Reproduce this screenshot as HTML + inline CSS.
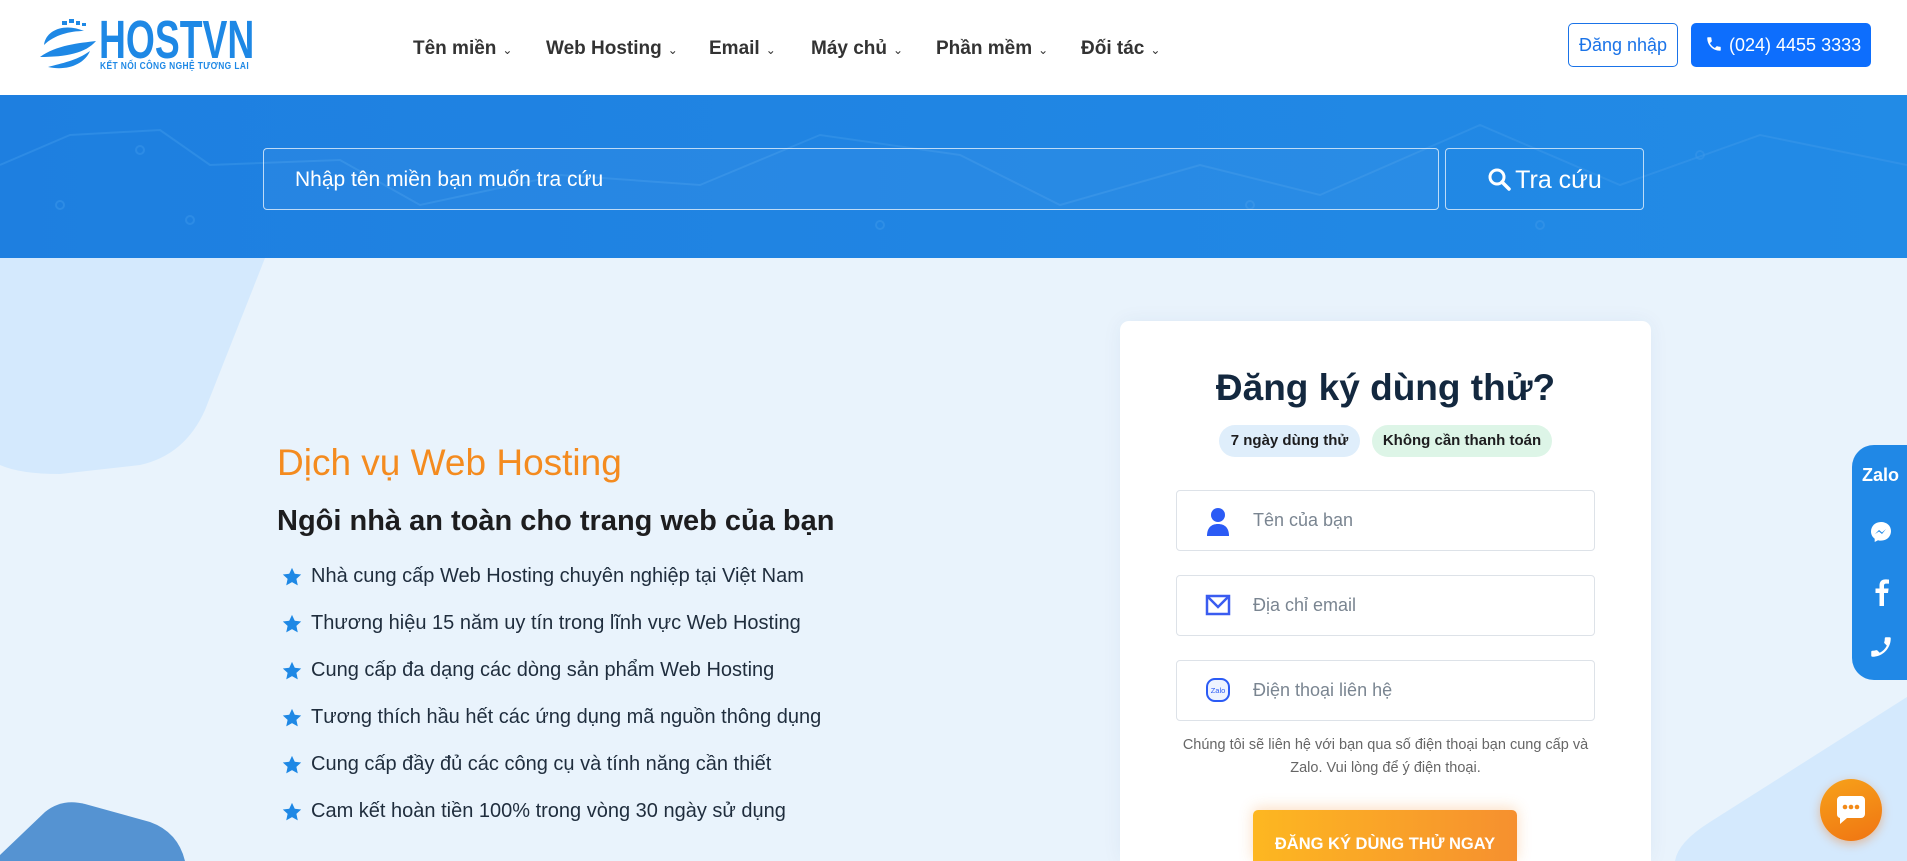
<!DOCTYPE html>
<html style="width:1907px;height:861px;overflow:hidden"><head><meta charset="utf-8">
<style>
*{box-sizing:border-box;margin:0;padding:0}
body{width:1907px;height:861px;overflow:hidden;position:relative;background:#e9f3fc;font-family:"Liberation Sans",Arial,sans-serif}
.hdr{position:absolute;left:0;top:0;width:1907px;height:95px;background:#fff}
.nav{position:absolute;top:38px;font-size:19px;font-weight:bold;color:#333;white-space:nowrap}
.nav span{font-size:12px;font-weight:normal;margin-left:6px}
.band{position:absolute;left:0;top:95px;width:1907px;height:163px;background:linear-gradient(90deg,#1e7fe0,#228be6);overflow:hidden}
.abs{position:absolute}
li{list-style:none;position:absolute;left:281px;font-size:20px;color:#1f2d3d;white-space:nowrap}
li svg{position:absolute;left:0;top:1px}
li b{font-weight:normal;margin-left:30px}
.inp{position:absolute;left:1176px;width:419px;height:61px;border:1px solid #dde2e8;border-radius:4px;background:#fff}
.inp .t{position:absolute;left:76px;top:19px;font-size:18px;color:#7a8591}
.inp svg{position:absolute;left:28px;top:16px}
</style></head><body>
<svg class="abs" style="left:0;top:0" width="1907" height="861">
<path d="M0 258 L265 258 L205 410 Q185 455 140 465 L60 474 Q20 474 0 465 Z" fill="#d4e9fd"/>
<path d="M0 855 L45 812 Q62 798 85 804 L150 822 Q178 832 185 861 L0 861Z" fill="#5593d2"/>
<path d="M1907 697 L1710 822 Q1678 842 1675 861 L1907 861 Z" fill="#d4e9fd"/>
</svg>

<div class="hdr">
  <svg class="abs" style="left:36px;top:17px" width="62" height="54" viewBox="0 0 62 54"><path d="M8 28 C10 12,30 6,48 14 C34 14,18 18,8 28Z" fill="#1e88e5"/><path d="M4 40 C20 28,44 26,60 24 C50 36,30 40,4 40Z" fill="#1e88e5"/><path d="M12 50 C26 46,40 44,54 34 C48 48,30 54,12 50Z" fill="#1e88e5"/><rect x="26" y="4" width="5" height="4" fill="#1e88e5"/><rect x="33" y="2" width="5" height="4" fill="#1e88e5"/><rect x="40" y="4" width="4" height="4" fill="#1e88e5"/><rect x="46" y="6" width="4" height="3" fill="#1e88e5"/></svg>
  <div class="abs" style="left:99px;top:13px;font-size:54px;font-weight:bold;color:#1e88e5;line-height:54px;transform:scaleX(0.69);transform-origin:0 0">HOSTVN</div>
  <div class="abs" style="left:100px;top:60px;font-size:10.5px;font-weight:bold;color:#1e88e5;letter-spacing:0.5px;transform:scaleX(0.8);transform-origin:0 0;white-space:nowrap">KẾT NỐI CÔNG NGHỆ TƯƠNG LAI</div>
  <div class="nav" style="left:413px">Tên miền<span>⌄</span></div>
  <div class="nav" style="left:546px">Web Hosting<span>⌄</span></div>
  <div class="nav" style="left:709px">Email<span>⌄</span></div>
  <div class="nav" style="left:811px">Máy chủ<span>⌄</span></div>
  <div class="nav" style="left:936px">Phần mềm<span>⌄</span></div>
  <div class="nav" style="left:1081px">Đối tác<span>⌄</span></div>
  <div class="abs" style="left:1568px;top:23px;width:110px;height:44px;border:1px solid #1a73e8;border-radius:5px;color:#1a73e8;font-size:18px;text-align:center;line-height:42px">Đăng nhập</div>
  <div class="abs" style="left:1691px;top:23px;width:180px;height:44px;background:#0d6efd;border-radius:5px;color:#fff;font-size:18px;line-height:44px;padding-left:14px;white-space:nowrap"><svg width="18" height="18" viewBox="0 0 24 24" style="vertical-align:-2px;margin-right:6px"><path d="M6.6 10.8a15 15 0 006.6 6.6l2.2-2.2c.3-.3.7-.4 1-.2 1.1.4 2.3.6 3.6.6.6 0 1 .4 1 1V20c0 .6-.4 1-1 1C10.6 21 3 13.4 3 4c0-.6.4-1 1-1h3.5c.6 0 1 .4 1 1 0 1.3.2 2.5.6 3.6.1.3 0 .7-.2 1z" fill="#fff"/></svg>(024) 4455 3333</div>
</div>

<div class="band">
  <svg class="abs" style="left:0;top:0" width="1907" height="163"><g stroke="#3b97ea" stroke-width="2" fill="none" opacity=".5"><path d="M0 70 L70 40 L160 35 L210 70 L340 65 L420 110 L560 80 L700 90 L820 40 L960 60 L1060 110 L1200 70 L1320 100 L1480 30 L1620 90 L1760 40 L1907 70"/></g><g fill="none" stroke="#3b97ea" stroke-width="2" opacity=".5"><circle cx="60" cy="110" r="4"/><circle cx="140" cy="55" r="4"/><circle cx="190" cy="125" r="4"/><circle cx="880" cy="130" r="4"/><circle cx="1250" cy="110" r="4"/><circle cx="1540" cy="130" r="4"/><circle cx="1700" cy="60" r="4"/></g></svg>
  <div class="abs" style="left:263px;top:53px;width:1176px;height:62px;border:1px solid rgba(255,255,255,.7);border-radius:4px;background:rgba(255,255,255,.04);color:#fff;font-size:21px;line-height:62px;padding-left:31px">Nhập tên miền bạn muốn tra cứu</div>
  <div class="abs" style="left:1445px;top:53px;width:199px;height:62px;border:1px solid rgba(255,255,255,.7);border-radius:4px;color:#fff;font-size:25px;line-height:62px;text-align:center"><svg width="24" height="24" viewBox="0 0 24 24" style="vertical-align:-3px;margin-right:4px"><circle cx="10" cy="10" r="7" stroke="#fff" stroke-width="3" fill="none"/><path d="M15 15l7 7" stroke="#fff" stroke-width="3.5" stroke-linecap="round"/></svg>Tra cứu</div>
</div>

<div class="abs" style="left:277px;top:442px;font-size:37px;color:#f48b1f;white-space:nowrap">Dịch vụ Web Hosting</div>
<div class="abs" style="left:277px;top:505px;font-size:29px;font-weight:bold;color:#1d1d1f;white-space:nowrap">Ngôi nhà an toàn cho trang web của bạn</div>
<ul>
<li style="top:565px"><svg width="22" height="22" viewBox="0 0 24 24"><path d="M12 2l3 6.5 7 .8-5.2 4.8 1.5 7L12 17.6 5.7 21.1l1.5-7L2 9.3l7-.8z" fill="#1e88e5"/></svg><b>Nhà cung cấp Web Hosting chuyên nghiệp tại Việt Nam</b></li>
<li style="top:612px"><svg width="22" height="22" viewBox="0 0 24 24"><path d="M12 2l3 6.5 7 .8-5.2 4.8 1.5 7L12 17.6 5.7 21.1l1.5-7L2 9.3l7-.8z" fill="#1e88e5"/></svg><b>Thương hiệu 15 năm uy tín trong lĩnh vực Web Hosting</b></li>
<li style="top:659px"><svg width="22" height="22" viewBox="0 0 24 24"><path d="M12 2l3 6.5 7 .8-5.2 4.8 1.5 7L12 17.6 5.7 21.1l1.5-7L2 9.3l7-.8z" fill="#1e88e5"/></svg><b>Cung cấp đa dạng các dòng sản phẩm Web Hosting</b></li>
<li style="top:706px"><svg width="22" height="22" viewBox="0 0 24 24"><path d="M12 2l3 6.5 7 .8-5.2 4.8 1.5 7L12 17.6 5.7 21.1l1.5-7L2 9.3l7-.8z" fill="#1e88e5"/></svg><b>Tương thích hầu hết các ứng dụng mã nguồn thông dụng</b></li>
<li style="top:753px"><svg width="22" height="22" viewBox="0 0 24 24"><path d="M12 2l3 6.5 7 .8-5.2 4.8 1.5 7L12 17.6 5.7 21.1l1.5-7L2 9.3l7-.8z" fill="#1e88e5"/></svg><b>Cung cấp đầy đủ các công cụ và tính năng cần thiết</b></li>
<li style="top:800px"><svg width="22" height="22" viewBox="0 0 24 24"><path d="M12 2l3 6.5 7 .8-5.2 4.8 1.5 7L12 17.6 5.7 21.1l1.5-7L2 9.3l7-.8z" fill="#1e88e5"/></svg><b>Cam kết hoàn tiền 100% trong vòng 30 ngày sử dụng</b></li>
</ul>

<div class="abs" style="left:1120px;top:321px;width:531px;height:540px;background:#fff;border-radius:9px 9px 0 0;box-shadow:0 0 20px rgba(0,60,140,.06)"></div>
<div class="abs" style="left:1120px;top:367px;width:531px;text-align:center;font-size:37px;font-weight:bold;color:#13283f">Đăng ký dùng thử?</div>
<div class="abs" style="left:1219px;top:425px;width:141px;height:32px;border-radius:16px;background:#dfeefb;font-size:15px;font-weight:bold;color:#1d1d1f;text-align:center;line-height:32px">7 ngày dùng thử</div>
<div class="abs" style="left:1372px;top:425px;width:180px;height:32px;border-radius:16px;background:#ddf5e7;font-size:15px;font-weight:bold;color:#1d1d1f;text-align:center;line-height:32px">Không cần thanh toán</div>
<div class="inp" style="top:490px"><svg width="26" height="30" viewBox="0 0 26 30"><circle cx="13" cy="8" r="7" fill="#2b5bf5"/><path d="M2 29c0-8 4-12 11-12s11 4 11 12z" fill="#2b5bf5"/></svg><div class="t">Tên của bạn</div></div>
<div class="inp" style="top:575px"><svg width="26" height="26" viewBox="0 0 26 26"><rect x="2" y="4" width="22" height="18" fill="none" stroke="#3a5cf0" stroke-width="2.5"/><path d="M2 4l11 11 11-11" fill="none" stroke="#3a5cf0" stroke-width="2.5"/></svg><div class="t">Địa chỉ email</div></div>
<div class="inp" style="top:660px"><svg width="26" height="26" viewBox="0 0 26 26"><rect x="2" y="2" width="22" height="22" rx="8" fill="#eef3ff" stroke="#2b5bf5" stroke-width="2"/><text x="13" y="16" font-size="7.5" text-anchor="middle" fill="#2b5bf5" font-family="Liberation Sans">Zalo</text></svg><div class="t">Điện thoại liên hệ</div></div>
<div class="abs" style="left:1120px;top:734px;width:531px;text-align:center;font-size:14.5px;line-height:23px;color:#666">Chúng tôi sẽ liên hệ với bạn qua số điện thoại bạn cung cấp và<br>Zalo. Vui lòng để ý điện thoại.</div>
<div class="abs" style="left:1253px;top:810px;width:264px;height:51px;border-radius:5px 5px 0 0;background:linear-gradient(90deg,#fdb721,#f6902f);box-shadow:0 -2px 14px rgba(246,144,47,.3);color:#fff;font-size:16.5px;font-weight:bold;text-align:center;padding-top:25px">ĐĂNG KÝ DÙNG THỬ NGAY</div>

<div class="abs" style="left:1852px;top:445px;width:55px;height:235px;background:#2088e6;border-radius:22px 0 0 22px"></div>
<div class="abs" style="left:1862px;top:465px;color:#fff;font-weight:bold;font-size:18px">Zalo</div>
<svg class="abs" style="left:1869px;top:520px" width="24" height="24" viewBox="0 0 24 24"><path d="M12 2C6 2 2 6.3 2 11.5c0 3 1.4 5.5 3.7 7.2V22l3.3-1.8c1 .3 2 .4 3 .4 6 0 10-4.3 10-9.5S18 2 12 2z" fill="#fff"/><path d="M6 14l4-4 3 2.5 4-3.5-4 5-3-2.5z" fill="#2088e6"/></svg>
<svg class="abs" style="left:1872px;top:578px" width="18" height="28" viewBox="0 0 18 28"><path d="M12 28V15h4l.6-4.5H12V7.8c0-1.3.4-2.2 2.3-2.2H17V1.6C16.5 1.5 15 1.4 13.4 1.4 9.9 1.4 7.5 3.5 7.5 7.4v3.1H3.5V15h4v13z" fill="#fff"/></svg>
<svg class="abs" style="left:1868px;top:634px" width="26" height="26" viewBox="0 0 24 24"><path d="M20 15.5c-1.2 0-2.4-.2-3.6-.6-.3-.1-.7 0-1 .2l-2.2 2.2a15 15 0 01-6.6-6.6l2.2-2.2c.3-.3.4-.7.2-1A11 11 0 018.5 4c0-.6-.4-1-1-1H4c-.6 0-1 .4-1 1 0 9.4 7.6 17 17 17 .6 0 1-.4 1-1v-3.5c0-.6-.4-1-1-1z" fill="#fff" transform="scale(-1,1) translate(-24,0)"/></svg>

<div class="abs" style="left:1820px;top:779px;width:62px;height:62px;border-radius:50%;background:linear-gradient(160deg,#f7a21a,#f07412);box-shadow:0 3px 10px rgba(240,116,18,.4)"></div>
<svg class="abs" style="left:1835px;top:794px" width="32" height="32" viewBox="0 0 32 32"><path d="M6 2h20a4 4 0 014 4v14a4 4 0 01-4 4H12l-7 6v-6a4 4 0 01-3-4V6a4 4 0 014-4z" fill="#fff"/><circle cx="10" cy="13" r="2.3" fill="#f28a18"/><circle cx="16" cy="13" r="2.3" fill="#f28a18"/><circle cx="22" cy="13" r="2.3" fill="#f28a18"/></svg>
</body></html>
